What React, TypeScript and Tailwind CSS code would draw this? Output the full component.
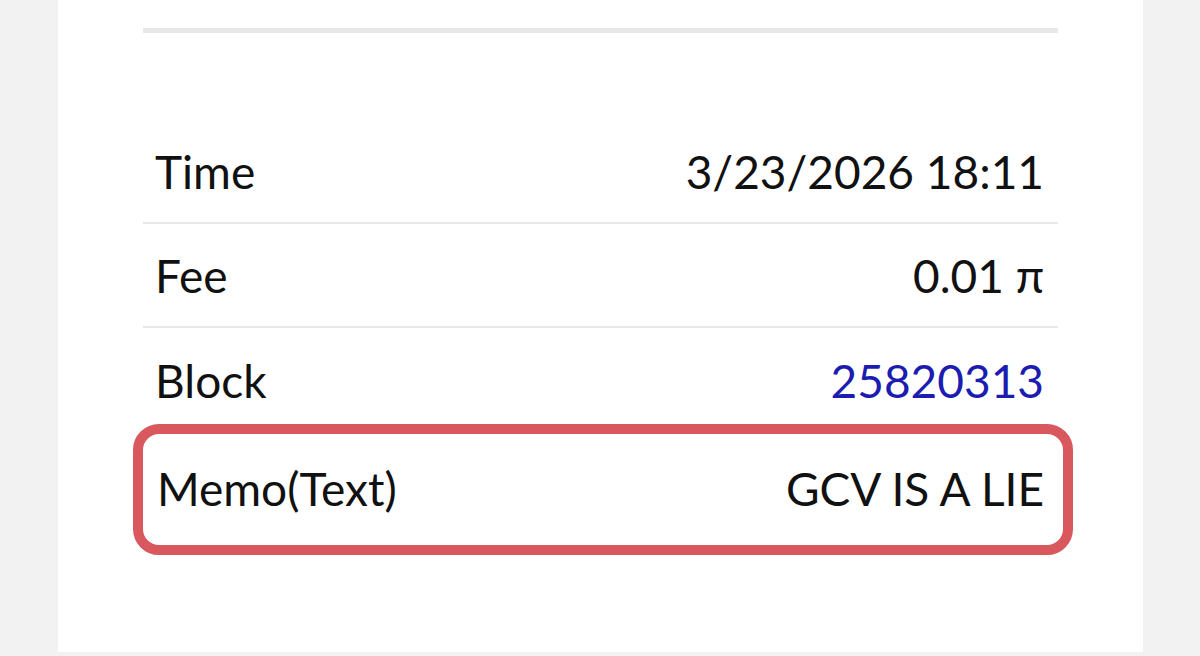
export default function App() {
  const rows = [
    { label: "Time", value: "3/23/2026 18:11" },
    { label: "Fee", value: "0.01 π" },
  ];

  return (
    <div className="w-[1200px] h-[656px] bg-[#f2f2f2] overflow-hidden" style={{ fontFamily: "Lato, 'Open Sans', sans-serif" }}>
      <div className="ml-[58px] w-[1085px] h-[652px] bg-white px-[85px] text-[46px] text-[#111]">
        <div className="pt-[28px]">
          <div className="h-[5px] bg-[#e8e8e8]" />
        </div>
        <div className="mt-[87px]">
          {rows.map((r) => (
            <div key={r.label} className="flex h-[104px] items-center justify-between border-b-2 border-[#e8e8e8] pl-[12px] pr-[14px]">
              <span>{r.label}</span>
              <span>{r.value}</span>
            </div>
          ))}
          <div className="flex h-[96px] items-center justify-between pl-[12px] pr-[14px] pt-[8px]">
            <span>Block</span>
            <span className="text-[#1c1cb0]">25820313</span>
          </div>
          <div className="-ml-[10px] -mr-[15px] flex h-[131px] items-center justify-between rounded-[26px] border-[10px] border-[#d9585d] pl-[14px] pr-[19px] pb-[2px]">
            <span>Memo(Text)</span>
            <span>GCV IS A LIE</span>
          </div>
        </div>
      </div>
    </div>
  );
}
